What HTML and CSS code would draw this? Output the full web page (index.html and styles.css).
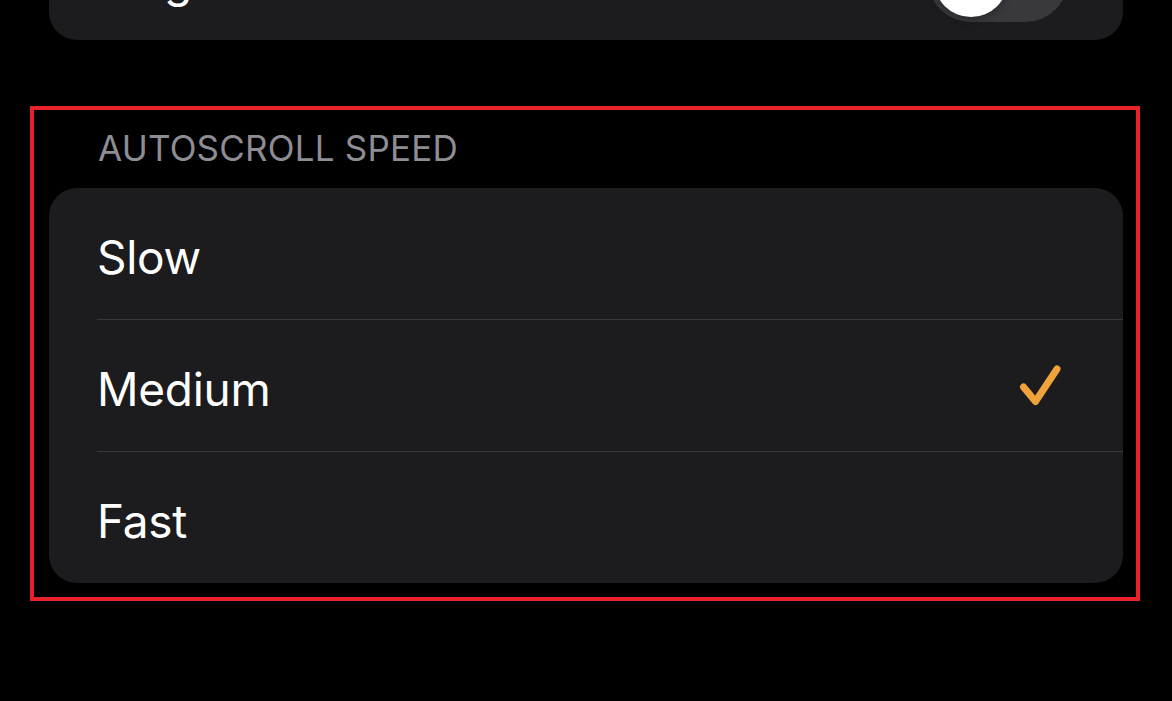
FILE: index.html
```html
<!DOCTYPE html>
<html lang="en">
<head>
<meta charset="utf-8">
<title>Autoscroll Speed</title>
<link rel="stylesheet" href="styles.css">
</head>
<body>
  <div class="card top-card">
    <div class="row toggle-row">
      <span class="label">Single Column</span>
      <div class="toggle"><div class="knob"></div></div>
    </div>
  </div>

  <section class="highlight">
    <div class="section-header">AUTOSCROLL SPEED</div>
    <div class="card list">
      <div class="row"><span class="label">Slow</span></div>
      <div class="row"><span class="label">Medium</span>
        <svg class="check" width="50" height="50" viewBox="0 0 50 50" aria-hidden="true">
          <polyline points="8.5,26 20.5,40.5 42,8" fill="none" stroke="#f0a33a" stroke-width="7" stroke-linecap="round" stroke-linejoin="round"/>
        </svg>
      </div>
      <div class="row"><span class="label">Fast</span></div>
    </div>
  </section>
</body>
</html>
```

FILE: styles.css
```css
html, body {
  margin: 0;
  padding: 0;
  background: #000;
}

body {
  font-family: Inter, "Noto Sans", "Liberation Sans", sans-serif;
  color: #fff;
  overflow: hidden;
  height: 701px;
}

.card {
  background: #1c1c1e;
  border-radius: 28px;
}

.top-card {
  margin: -91px 49px 0 49px;
  height: 131px;
  box-sizing: border-box;
  padding-top: 10px;
}

.toggle-row {
  height: 121px;
  display: flex;
  align-items: center;
  justify-content: space-between;
  padding-right: 55px;
}

.toggle {
  width: 140px;
  height: 85px;
  border-radius: 43px;
  background: #39393d;
  box-sizing: border-box;
  padding: 5.5px;
  display: flex;
  align-items: center;
}

.knob {
  width: 74px;
  height: 74px;
  border-radius: 50%;
  background: #fff;
  box-shadow: 0 3px 8px rgba(0, 0, 0, 0.25);
}

.highlight {
  margin: 66px 0 0 30px;
  width: 1110px;
  height: 495px;
  box-sizing: border-box;
  border: 4px solid #e8212b;
  padding: 17px 13px 0 15px;
}

.section-header {
  font-size: 35px;
  line-height: 42px;
  color: #8d8d93;
  padding-left: 49px;
  margin-bottom: 19px;
  letter-spacing: 0.2px;
}

.list {
  height: 395px;
  overflow: hidden;
}

.row {
  display: flex;
  align-items: center;
  justify-content: space-between;
  padding-left: 48px;
  box-sizing: border-box;
}

.list .row {
  height: 131px;
  padding-top: 6px;
  padding-right: 58px;
}

.list .row + .row {
  height: 132px;
  border-top: 1px solid #38383a;
  margin-left: 48px;
  padding-left: 0;
}

.label {
  font-size: 46px;
  line-height: 56px;
  letter-spacing: -0.3px;
}

.check {
  display: block;
  margin-top: -6px;
}
```
